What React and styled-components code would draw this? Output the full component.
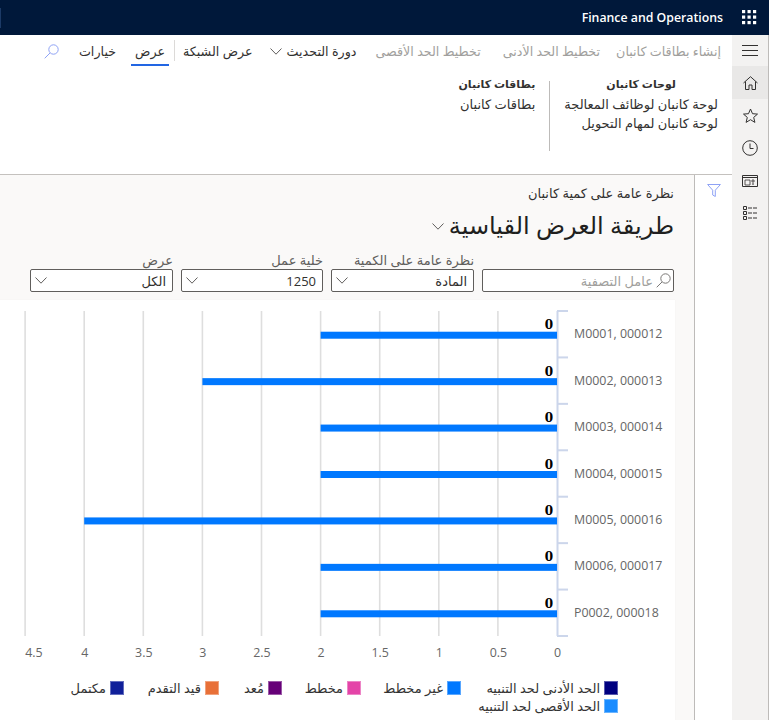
import React from "react";
import styled, { createGlobalStyle } from "styled-components";

const Global = createGlobalStyle`
  html, body { margin: 0; padding: 0; height: 720px; overflow: hidden; background: #fff; }
  body { font-family: "Open Sans", "DejaVu Sans", sans-serif; color: #323130; }
  * { box-sizing: border-box; }
`;
const Page = styled.div`width: 769px; height: 720px; display: flex; flex-direction: column; overflow: hidden;`;
const TopBar = styled.header`
  height: 35px; flex: none; background: #00183a; color: #fff; display: flex; align-items: center; justify-content: space-between;
  direction: ltr; padding-right: 12px;
`;
const TabStub = styled.span`width: 1px; height: 20px; background: #1c3a66;`;
const Brand = styled.div`display: flex; align-items: center; gap: 19px;`;
const BrandName = styled.span`font: 600 12.3px "Open Sans", sans-serif; white-space: nowrap;`;
const Body = styled.div`flex: 1; display: flex; min-height: 0;`;
const Sidebar = styled.nav`
  width: 37px; flex: none; background: #f3f2f1; border-right: 1px solid #bdbbb9; display: flex; flex-direction: column;
`;
const SideButton = styled.div`
  height: ${p => p.$h || 32.7}px; display: flex; align-items: center; justify-content: center; background: ${p => (p.$active ? "#e9e8e7" : "transparent")};
`;
const Main = styled.main`flex: 1; display: flex; flex-direction: column; min-width: 0;`;
const ActionBar = styled.div`height: 31px; flex: none; display: flex; align-items: stretch; padding-right: 11px; font-size: 12.7px; white-space: nowrap;`;
const Action = styled.div`
  display: flex; align-items: center; gap: 5px; height: 100%; position: relative; padding-top: 1px; margin-left: ${p => p.$gap ?? 18}px; color: ${p => (p.$off ? "#a19f9d" : "#323130")};
  ${p => p.$on && `&::after { content: ""; position: absolute; bottom: 0; left: -4px; right: -4px; height: 2px; background: #2266e3; }`}
`;
const ActionSep = styled.span`width: 1px; height: 21px; align-self: center; background: #dcdad8; margin-left: 9px;`;
const Ribbon = styled.section`
  height: 109px; flex: none; border-bottom: 1px solid #c4c1be; display: flex; align-items: flex-start; gap: 14px; padding: 9px 14px 0 0; font-size: 13px;
`;
const RibbonGroup = styled.div`display: flex; flex-direction: column;`;
const RibbonHead = styled.div`font-size: 11px; font-weight: 700; line-height: 19px; margin: -1px 0 2px; text-align: center;`;
const RibbonLink = styled.div`line-height: 18.5px; white-space: nowrap;`;
const RibbonSep = styled.span`width: 1px; height: 70px; margin-top: 6px; background: #bdbbb9;`;
const Workspace = styled.div`flex: 1; display: flex; min-height: 0;`;
const FilterPane = styled.aside`
  width: 38px; flex: none; background: #fff; border-left: 1px solid #bdbbb9; display: flex; justify-content: center; padding-top: 9px;
`;
const Content = styled.div`flex: 1; background: #faf9f8; padding: 10px 20px 0 0; min-width: 0; display: flex; flex-direction: column;`;
const Crumb = styled.div`font-size: 13px; line-height: 17px; color: #323130;`;
const TitleRow = styled.div`display: flex; align-items: center; gap: 5px; margin-top: 6px; height: 36px;`;
const Title = styled.h1`margin: 0 0 4px; font-size: 24px; font-weight: 400; white-space: nowrap; color: #201f1e;`;
const Filters = styled.div`display: flex; gap: 8px; margin-top: 7px; padding-left: 30px; align-items: flex-end;`;
const Field = styled.div`display: flex; flex-direction: column; width: ${p => p.$w}px;`;
const FieldLabel = styled.label`font-size: 13px; line-height: 18px; color: #605e5c; white-space: nowrap;`;
const Input = styled.div`
  height: 23px; border: 1px solid #605e5c; border-radius: 2px; background: #fff; display: flex; align-items: center; justify-content: space-between;
  padding: 0 6px 0 4px; font-size: 13px; color: #323130;
`;
const SearchInput = styled(Input)`justify-content: flex-start; gap: 3px; padding-right: 2px; color: #a19f9d;`;
const Card = styled.div`flex: 1; margin-top: 8px; background: #fff; width: 675px; min-height: 0; display: flex; flex-direction: column; align-self: flex-end; box-shadow: 0 0 1px rgba(0,0,0,.06);`;
const ChartSvg = styled.svg`display: block; flex: none; direction: ltr;`;
const Legend = styled.div`display: flex; flex-wrap: wrap; padding: 6px 57px 0 0; row-gap: 4px; width: 675px; font-size: 13px; line-height: 14px;`;
const LegendRow = styled.div`display: flex; width: 100%;`;
const LegendItem = styled.div`display: flex; align-items: center; gap: 4px; width: ${p => p.$w}px; white-space: nowrap; color: #333;`;
const Swatch = styled.span`width: 14px; height: 14px; flex: none; background: ${p => p.$c}; border: 1px solid rgba(255,255,255,.35);`;

const Stroke = { fill: "none", stroke: "#323130", strokeWidth: 1 };
const Chevron = ({ c = "#605e5c", w = 12 }) => (
  <svg width={w} height={7} viewBox="0 0 12 7" fill="none"><path d="M.5.5 6 6.2 11.5.5" stroke={c} /></svg>
);
const Waffle = () => (
  <svg width="15" height="15" viewBox="0 0 15 15" fill="#fff">
    {[0, 5.5, 11].flatMap(y => [0, 5.5, 11].map(x => <rect key={`${x}-${y}`} x={x} y={y} width="3.2" height="3.2" />))}
  </svg>
);
const SearchIcon = ({ c = "#8ea2f5" }) => (
  <svg width="15" height="15" viewBox="0 0 15 15" fill="none" stroke={c}><circle cx="9.5" cy="5.5" r="4.7" /><path d="M6 9 .7 14.3" /></svg>
);
const Hamburger = () => (
  <svg width="16" height="11" viewBox="0 0 16 11" {...Stroke}><path d="M0 .5h16M0 5.5h16M0 10.5h16" /></svg>
);
const HomeIcon = () => (
  <svg width="15" height="14" viewBox="0 0 15 14" {...Stroke}><path d="M.5 7 7.5.7 14.5 7M2.5 5.5v8h3.5V9h3v4.5h3.5v-8" /></svg>
);
const StarIcon = () => (
  <svg width="15" height="15" viewBox="0 0 15 15" {...Stroke}><path d="M7.5 1 9.5 5.7l5 .4-3.8 3.3 1.2 5-4.4-2.7-4.4 2.7 1.2-5L.5 6.1l5-.4z" /></svg>
);
const ClockIcon = () => (
  <svg width="16" height="16" viewBox="0 0 16 16" {...Stroke}><circle cx="8" cy="8" r="7.3" /><path d="M8 3.5V8.5H11.5" /></svg>
);
const PanelIcon = () => (
  <svg width="16" height="12" viewBox="0 0 16 12" {...Stroke}><path d="M.5.5h15v11H.5zM.5 2.5h15" /><path d="M3 5h5v5H3zM10 5h2v2h-2z" strokeWidth=".8" /><path d="M10 9h2" /></svg>
);
const ListIcon = () => (
  <svg width="15" height="14" viewBox="0 0 15 14" {...Stroke}><path d="M.5.5h3v3h-3zM.5 5.5h3v3h-3zM.5 10.5h3v3h-3z" /><path d="M5 2h10M5 7h10M5 12h10" strokeDasharray="4 1" /></svg>
);
const FunnelIcon = () => (
  <svg width="14" height="13" viewBox="0 0 14 13" fill="none" stroke="#8ea2f5"><path d="M.6.5h12.8L8.3 6.2v6.3L5.7 11V6.2z" /></svg>
);

const X0 = 557, UNIT = 118.2, TOP = 11, BOTTOM = 336;
const rows = [["M0001, 000012", 2], ["M0002, 000013", 3], ["M0003, 000014", 2], ["M0004, 000015", 2], ["M0005, 000016", 4], ["M0006, 000017", 2], ["P0002, 000018", 2]];
const ticks = [0, 0.5, 1, 1.5, 2, 2.5, 3, 3.5, 4, 4.5];
const band = (BOTTOM - TOP) / rows.length;

const Chart = () => (
  <ChartSvg width="675" height="375" viewBox="0 0 675 375">
    {ticks.slice(1).map(t => <rect key={t} x={X0 - t * UNIT - 0.8} y={TOP} width="1.6" height={BOTTOM - TOP} fill="#dedede" />)}
    <rect x={X0 - 0.5} y={TOP} width="2" height={BOTTOM - TOP} fill="#ccd6eb" />
    {rows.map((_, i) => <rect key={i} x={X0} y={TOP + i * band - 1} width="11" height="2" fill="#ccd6eb" />)}
    <rect x={X0} y={BOTTOM - 1} width="11" height="2" fill="#ccd6eb" />
    {rows.map(([label, v], i) => {
      const cy = TOP + (i + 0.5) * band;
      return (
        <g key={label}>
          <rect x={X0 - v * UNIT} y={cy - 2.5} width={v * UNIT} height="7" fill="#0078ff" />
          <text x={X0 - 8} y={cy - 5} textAnchor="middle" fontFamily="'DejaVu Serif', serif" fontWeight="700" fontSize="12" fill="#000">0</text>
          <text x="574" y={cy + 4} fontFamily="'Open Sans', sans-serif" fontSize="12.4" fill="#666">{label}</text>
        </g>
      );
    })}
    {ticks.map(t => (
      <text key={t} x={t === 4.5 ? 34 : X0 - t * UNIT + 0.5} y="357" textAnchor="middle" fontFamily="'Open Sans', sans-serif" fontSize="12.4" fill="#666">{t}</text>
    ))}
  </ChartSvg>
);

const legendTop = [
  ["الحد الأدنى لحد التنبيه", "#000080", 157],
  ["غير مخطط", "#0078ff", 100],
  ["مخطط", "#e444a8", 79],
  ["مُعد", "#660078", 63],
  ["قيد التقدم", "#e87038", 95],
  ["مكتمل", "#10209a", 90],
];

export default function App() {
  return (
    <Page dir="rtl">
      <Global />
      <TopBar>
        <TabStub />
        <Brand><BrandName>Finance and Operations</BrandName><Waffle /></Brand>
      </TopBar>
      <Body>
        <Sidebar>
          <SideButton $h={31}><Hamburger /></SideButton>
          <SideButton $active $h={33}><HomeIcon /></SideButton>
          <SideButton><StarIcon /></SideButton>
          <SideButton><ClockIcon /></SideButton>
          <SideButton><PanelIcon /></SideButton>
          <SideButton><ListIcon /></SideButton>
        </Sidebar>
        <Main>
          <ActionBar>
            <Action $off $gap={16}>إنشاء بطاقات كانبان</Action>
            <Action $off $gap={22}>تخطيط الحد الأدنى</Action>
            <Action $off $gap={19}>تخطيط الحد الأقصى</Action>
            <Action $gap={17}>دورة التحديث<Chevron /></Action>
            <Action $gap={8}>عرض الشبكة</Action>
            <ActionSep />
            <Action $on $gap={19}>عرض</Action>
            <Action $gap={20}>خيارات</Action>
            <Action><SearchIcon /></Action>
          </ActionBar>
          <Ribbon>
            <RibbonGroup>
              <RibbonHead>لوحات كانبان</RibbonHead>
              <RibbonLink>لوحة كانبان لوظائف المعالجة</RibbonLink>
              <RibbonLink>لوحة كانبان لمهام التحويل</RibbonLink>
            </RibbonGroup>
            <RibbonSep />
            <RibbonGroup>
              <RibbonHead>بطاقات كانبان</RibbonHead>
              <RibbonLink>بطاقات كانبان</RibbonLink>
            </RibbonGroup>
          </Ribbon>
          <Workspace>
            <FilterPane><FunnelIcon /></FilterPane>
            <Content>
              <Crumb>نظرة عامة على كمية كانبان</Crumb>
              <TitleRow><Title>طريقة العرض القياسية</Title><Chevron /></TitleRow>
              <Filters>
                <Field $w={192}>
                  <SearchInput><SearchIcon c="#7a7876" />عامل التصفية</SearchInput>
                </Field>
                <Field $w={143}>
                  <FieldLabel>نظرة عامة على الكمية</FieldLabel>
                  <Input>المادة<Chevron /></Input>
                </Field>
                <Field $w={142}>
                  <FieldLabel>خلية عمل</FieldLabel>
                  <Input>1250<Chevron /></Input>
                </Field>
                <Field $w={143}>
                  <FieldLabel>عرض</FieldLabel>
                  <Input>الكل<Chevron /></Input>
                </Field>
              </Filters>
              <Card>
                <Chart />
                <Legend>
                  <LegendRow>
                    {legendTop.map(([t, c, w]) => <LegendItem key={t} $w={w}><Swatch $c={c} />{t}</LegendItem>)}
                  </LegendRow>
                  <LegendRow>
                    <LegendItem $w={200}><Swatch $c="#1a8cff" />الحد الأقصى لحد التنبيه</LegendItem>
                  </LegendRow>
                </Legend>
              </Card>
            </Content>
          </Workspace>
        </Main>
      </Body>
    </Page>
  );
}
